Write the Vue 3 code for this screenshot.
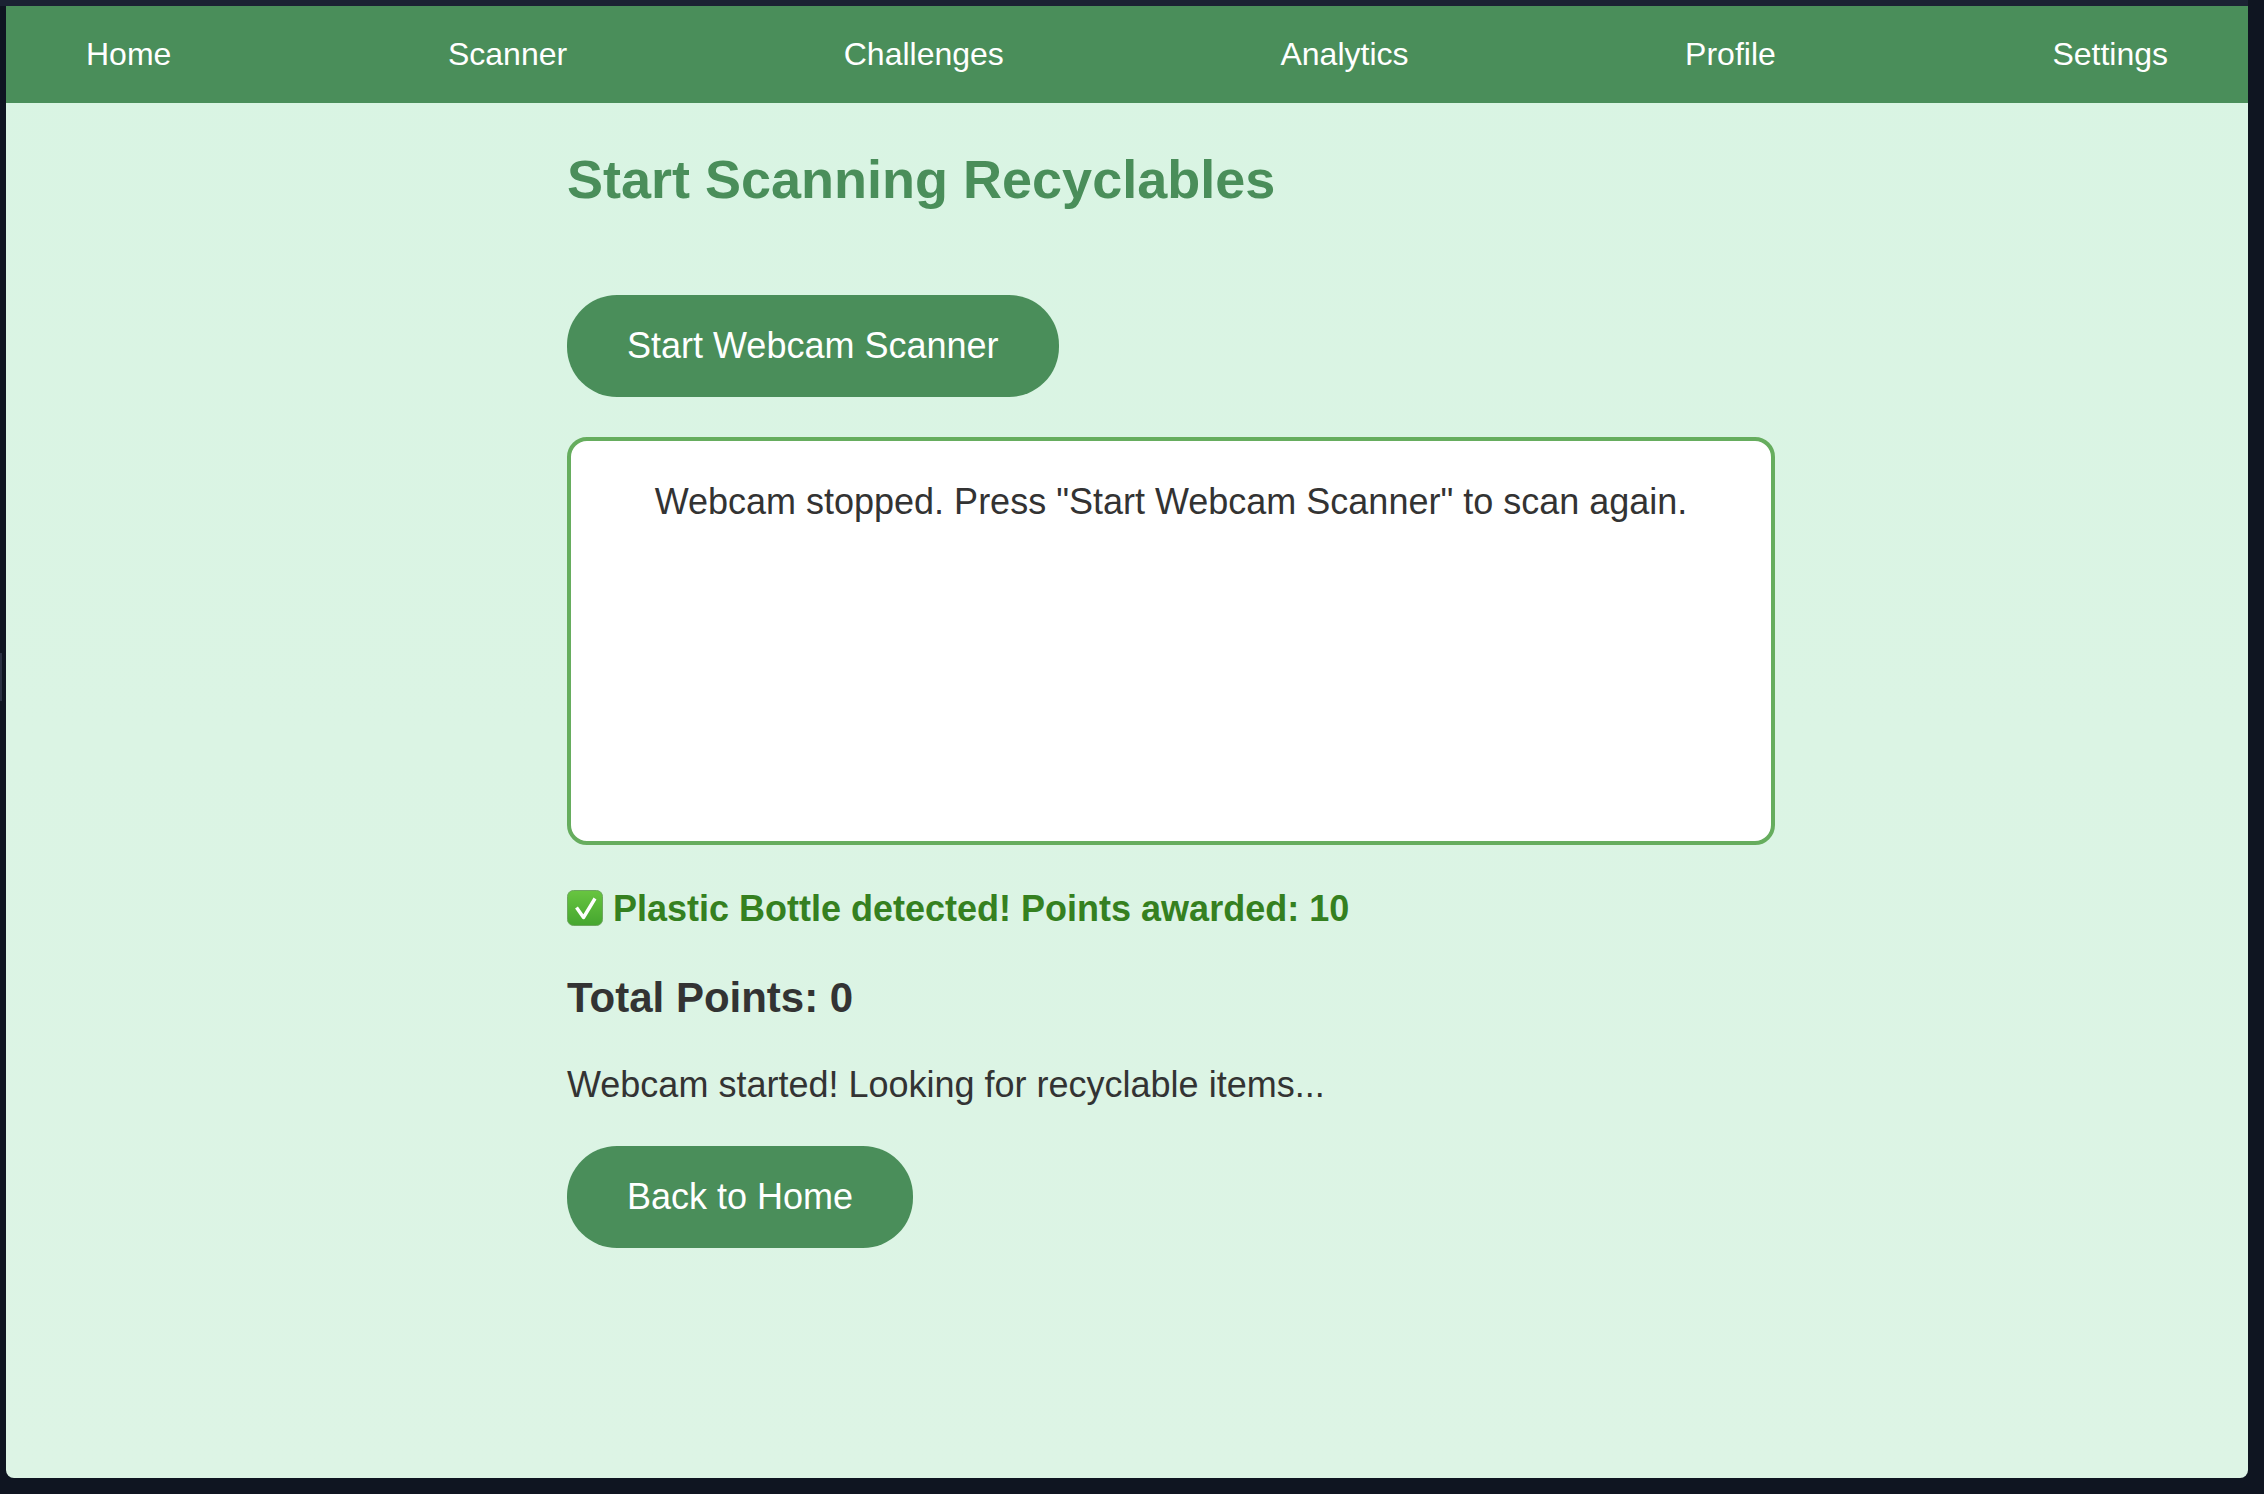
<script setup>
const links = ['Home', 'Scanner', 'Challenges', 'Analytics', 'Profile', 'Settings']
</script>

<template>
  <div class="desktop">
    <div class="topline"></div>
    <div class="handle"></div>
    <div class="window">
      <nav class="nav">
        <a v-for="link in links" :key="link" class="nav-link">{{ link }}</a>
      </nav>
      <main class="content">
        <h1 class="title">Start Scanning Recyclables</h1>
        <button class="btn start">Start Webcam Scanner</button>
        <div class="webcam">Webcam stopped. Press "Start Webcam Scanner" to scan again.</div>
        <p class="result">
          <svg class="check" viewBox="0 0 36 36" aria-hidden="true">
            <defs>
              <linearGradient id="checkFill" x1="0" y1="0" x2="0" y2="1">
                <stop offset="0" stop-color="#68c540" />
                <stop offset="1" stop-color="#45a62f" />
              </linearGradient>
            </defs>
            <rect x="0.5" y="0.5" width="35" height="35" rx="6" fill="url(#checkFill)" stroke="#6da75f" />
            <path d="M9.5 17.5 L16.5 27.5 L28 8.5" fill="none" stroke="#fff" stroke-width="3.4" stroke-linejoin="round" />
          </svg>
          <span>Plastic Bottle detected! Points awarded: 10</span>
        </p>
        <h2 class="points">Total Points: 0</h2>
        <p class="status">Webcam started! Looking for recyclable items...</p>
        <button class="btn back">Back to Home</button>
      </main>
    </div>
  </div>
</template>

<style>
html,
body {
  margin: 0;
  background: #0f1521;
}
</style>

<style scoped>
.desktop {
  position: relative;
  height: 1494px;
  overflow: hidden;
}

.topline {
  width: 2248px;
  height: 6px;
  background: #1b2233;
}

/* little tab peeking out at the left screen edge */
.handle {
  position: absolute;
  left: 0;
  top: 653px;
  width: 2px;
  height: 48px;
  background: #2a3142;
}

.window {
  width: 2242px;
  height: 1472px;
  margin-left: 6px;
  border-radius: 0 0 8px 8px;
  background: linear-gradient(#d9f4e3, #ddf4e5);
  font-family: "Liberation Sans", Arial, sans-serif;
  overflow: hidden;
}

.nav {
  height: 97px;
  padding: 0 80px;
  background: #4a8e5a;
  display: flex;
  align-items: center;
  justify-content: space-between;
}

.nav-link {
  color: #fff;
  font-size: 32px;
}

.content {
  width: 1208px;
  margin-left: 561px;
  display: flex;
  flex-direction: column;
  align-items: flex-start;
}

.title {
  margin: 44px 0 0;
  color: #4a8e5a;
  font-size: 54px;
  line-height: 64px;
  font-weight: 700;
}

.btn {
  border: none;
  border-radius: 50px;
  background: #4a8e5a;
  color: #fff;
  font-family: inherit;
  font-size: 36px;
  height: 102px;
  padding: 0 60px;
}

.start {
  margin-top: 84px;
}

.webcam {
  box-sizing: border-box;
  width: 1208px;
  height: 408px;
  margin-top: 40px;
  padding: 41px 20px 0;
  border: 4px solid #66ad5e;
  border-radius: 20px;
  background: #fff;
  color: #333;
  font-size: 36px;
  line-height: 40px;
  text-align: center;
}

.result {
  margin: 44px 0 0;
  display: flex;
  align-items: center;
  gap: 10px;
  color: #358020;
  font-size: 36px;
  line-height: 40px;
  font-weight: 700;
}

.check {
  width: 36px;
  height: 36px;
  margin-top: -3px;
}

.points {
  margin: 45px 0 0;
  color: #333;
  font-size: 42px;
  line-height: 48px;
  font-weight: 700;
}

.status {
  margin: 43px 0 0;
  color: #333;
  font-size: 36px;
  line-height: 40px;
}

.back {
  margin-top: 41px;
}
</style>
